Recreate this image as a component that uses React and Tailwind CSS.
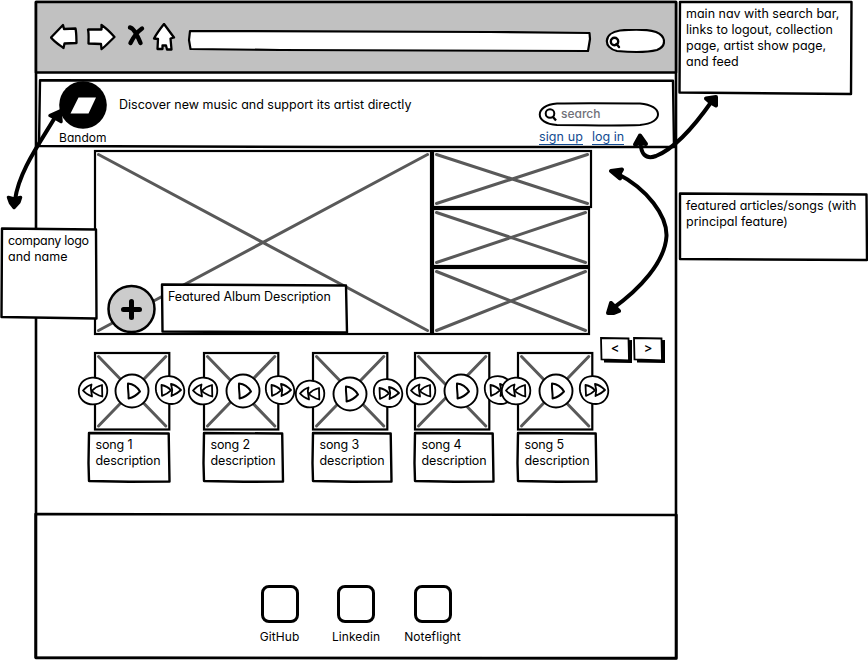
import React from "react";

// Hand-drawn rectangle outline. `pts` holds the corners: tl, tr, br, bl.
function Outline({ w, h, pts, fill = "none", sw = 2.4 }) {
  const p = pts || [[0, 0], [w, 0], [w, h], [0, h]];
  return (
    <svg className="pointer-events-none absolute left-0 top-0 overflow-visible" width={w} height={h}>
      <path
        d={"M" + p.map((c) => c.join(" ")).join("L") + "Z"}
        fill={fill}
        stroke="#000"
        strokeWidth={sw}
        strokeLinejoin="round"
      />
    </svg>
  );
}

function Crossed({ w, h, className = "", sw = 3, children }) {
  return (
    <div className={"relative shrink-0 " + className}>
      <svg className="absolute left-0 top-0 overflow-visible" width={w} height={h}>
        <rect x="0" y="0" width={w} height={h} fill="#fff" stroke="#000" strokeWidth="2.2" />
        <path
          d={`M3.5 3.5L${w - 3.5} ${h - 3.5}M${w - 3.5} 3.5L3.5 ${h - 3.5}`}
          stroke="#595959"
          strokeWidth={sw}
          strokeLinecap="round"
        />
      </svg>
      {children}
    </div>
  );
}

function Rewind({ className }) {
  return (
    <svg className={"absolute overflow-visible " + className} width="30" height="28" viewBox="0 0 30 28" stroke="#000" strokeLinejoin="round" fill="#fff">
      <path strokeWidth="1.8" d="M14 .6C22 0 29 5 29.3 13C29.6 22 23 27.4 15 27.4C7 27.4 .9 22 .8 14.5C.7 7 6 1.2 14 .6Z" />
      <path strokeWidth="1.8" d="M13.500 7.500L12.800 11L14 19.500C10 18 7 16 5 13.500C7.500 10.500 10 8.500 13.500 7.500Z" />
      <path strokeWidth="1.8" d="M24 8L24.300 19.500C20 18.200 16.500 16.500 13.800 13.800C16.500 11 20 9 24 8Z" />
    </svg>
  );
}

function Forward({ className }) {
  return (
    <svg className={"absolute overflow-visible " + className} width="30" height="28" viewBox="0 0 30 28" stroke="#000" strokeLinejoin="round" fill="#fff">
      <path strokeWidth="1.8" d="M11 .4C20 -1 28.500 5 29.300 14C29.600 22 24 28 17 28C9 28 3 23.500 1.200 16C-.5 8 3 1.500 11 .4Z" />
      <path strokeWidth="1.8" d="M6.500 9L7 19.800C10.500 18.500 13.500 16.800 16 14.300C13.500 11.500 10.500 9.800 6.500 9Z" />
      <path strokeWidth="1.8" d="M16 8L17.200 14L16.500 20C20 18.500 23.500 16.500 26 14C23 11 20 8.800 16 8Z" />
    </svg>
  );
}

function Play({ className }) {
  return (
    <svg className={"absolute overflow-visible " + className} width="34" height="34" viewBox="0 0 34 34" stroke="#000" strokeLinejoin="round" fill="#fff">
      <circle cx="17" cy="17" r="16.500" strokeWidth="1.900" />
      <path strokeWidth="2" d="M13 9.500C18 10 22 12.500 25 17.500C21.500 21.500 18 23.500 13.600 24.500C13.900 19 12.500 15 13 9.500Z" />
    </svg>
  );
}

const songs = [
  { n: 1, gap: "", desc: "-ml-[6px]", w: 80.5, rew: "-left-[17px] top-[24px]", play: "left-[20.500px] top-[20.500px]", fwd: "left-[60.500px] top-[23px]" },
  { n: 2, gap: "ml-[34px]", desc: "", w: 79, rew: "-left-[16px] top-[24px]", play: "left-[22px] top-[20.500px]", fwd: "left-[61.500px] top-[23px]" },
  { n: 3, gap: "ml-[34px]", desc: "", w: 78.5, rew: "-left-[18px] top-[26.500px]", play: "left-[20px] top-[23.500px]", fwd: "left-[60px] top-[26px]" },
  { n: 4, gap: "ml-[27px]", desc: "", w: 78.5, rew: "-left-[9px] top-[24px]", play: "left-[29px] top-[20.500px]", fwd: "left-[69px] top-[23px]" },
  { n: 5, gap: "ml-[28px]", desc: "", w: 78.5, rew: "-left-[17px] top-[24px]", play: "left-[21px] top-[20.500px]", fwd: "left-[61px] top-[23px]" },
];

function Chrome() {
  return (
    <header className="relative flex h-[71px] shrink-0 items-start bg-[#c1c1c1]">
      <Outline w={640} h={71} sw={2.6} pts={[[0, 0], [640, 0], [640, 70.5], [0, 70.5]]} />
      <svg className="relative ml-[14px] mt-[21px] shrink-0" width="128" height="29" viewBox="50 23 128 29" fill="#fff" stroke="#000" strokeWidth="2.3" strokeLinejoin="round">
        <path d="M51 37.500L63 25L64 29L75.500 28.500C76.500 33 76.300 38 76.500 43L64.500 43.500L63.500 48C58 44 54 41.500 51 37.500Z" />
        <path d="M88 29.500L101.500 29.500L101.500 25C106 28 111 33 114.500 37C110 41 106 46 101.500 49L101 44L88.500 43.500C88.500 39 89 34 88 29.500Z" />
        <path d="M130 27.500C134 28 138 37 140.500 43M142 28.500C137 32 133 38 130.500 43" strokeWidth="4.400" strokeLinecap="round" fill="none" />
        <path d="M164 24L174 37.500L170.500 38.500L171.500 49.500L167 49.500L166 45.500L162.500 45.500L162.500 49L157.500 49L158 39L154 38.500C157 33 160 29 164 24Z" />
      </svg>
      <div className="relative ml-[12px] mt-[29px] h-[19px] w-[399px] shrink-0">
        <Outline w={399} h={19} fill="#fff" sw={2.2} pts={[[0, 0], [300, 1], [399.500, 2], [400, 8], [398, 20], [90, 19], [0.500, 18], [-1, 9]]} />
      </div>
      <svg className="relative ml-[16px] mt-[27px] shrink-0" width="60" height="26" viewBox="605 29 60 26">
        <path d="M620 30.500C634 29 648 29.500 656 32C666 36 667 46 657 50C645 53 628 52 617 51C603 48 603 33 620 30.500Z" fill="#fff" stroke="#000" strokeWidth="2.200" />
        <circle cx="614.500" cy="41.500" r="3.700" fill="none" stroke="#000" strokeWidth="2.400" />
        <path d="M616.500 44L619 47" stroke="#000" strokeWidth="2.400" strokeLinecap="round" />
      </svg>
    </header>
  );
}

function Nav() {
  return (
    <nav className="relative ml-[3px] mt-[7px] flex h-[67px] w-[635px] shrink-0">
      <Outline w={635} h={67} sw={2.400} pts={[[1, 0.300], [634, 0.800], [635, 67], [300, 67], [0, 66]]} />
      <div className="ml-[20px] flex w-[60px] flex-col items-start">
        <svg className="mt-[1px]" width="48" height="48" viewBox="0 0 48 48">
          <circle cx="24" cy="24" r="23.800" />
          <path d="M19.500 16.500L37 16.500L29.500 32.500L11.500 32.500Z" fill="#fff" />
        </svg>
        <span className="mt-px text-[12px] leading-4 tracking-[0.05px]">Bandom</span>
      </div>
      <p className="mt-[17px] w-[420px] whitespace-nowrap leading-4">Discover new music and support its artist directly</p>
      <div className="mt-[23px] flex flex-col">
        <div className="relative flex h-[22px] w-[119px] items-center">
          <svg className="absolute left-0 top-0 overflow-visible" width="119" height="22">
            <path d="M18 .5C45 0 75 .3 101 .5C124 2 126 20 101 22C75 23 45 22 18 22C-5 21 -5 2 18 .5Z" fill="#fff" stroke="#000" strokeWidth="2" />
            <circle cx="11" cy="10.500" r="4.300" fill="none" stroke="#000" strokeWidth="2" />
            <path d="M14 14L17 17.500" stroke="#000" strokeWidth="2.300" />
          </svg>
          <span className="relative ml-[22px] text-[12px] font-medium text-[#707078]">search</span>
        </div>
        <div className="mt-[4px] flex gap-[9px] text-[#134b91]">
          <a className="h-[16px] whitespace-nowrap border-b border-[#134b91] leading-4 tracking-[0.1px]">sign up</a>
          <a className="h-[16px] whitespace-nowrap border-b border-[#134b91] leading-4">log in</a>
        </div>
      </div>
    </nav>
  );
}

function Featured() {
  return (
    <section className="ml-[58.500px] mt-[4px] flex shrink-0">
      <Crossed w={336} h={183} className="flex h-[183px] w-[337px] items-end">
        <svg className="relative mb-px ml-[12px]" width="50" height="50" viewBox="0 0 50 50">
          <circle cx="24.500" cy="26" r="23" fill="#ccc" stroke="#000" strokeWidth="2.500" />
          <path d="M16.500 26.500H32.500M24.500 18.500V34.500" stroke="#000" strokeWidth="5" strokeLinecap="round" />
        </svg>
        <div className="relative mb-[2px] ml-[5px] h-[47px] w-[184px]">
          <Outline w={184} h={47} fill="#fff" pts={[[0, -0.500], [184, 0.500], [185, 47.500], [0.500, 46.500]]} />
          <p className="relative ml-[6.500px] mt-[4px] whitespace-nowrap leading-4 tracking-[-0.09px]">Featured Album Description</p>
        </div>
      </Crossed>
      <div className="flex flex-col gap-[2px]">
        <Crossed w={158} h={56} className="ml-[1px] h-[56px] w-[158px]" />
        <Crossed w={156} h={57} className="ml-[1.500px] h-[57px] w-[156px]" />
        <Crossed w={156} h={66} className="ml-[1.500px] h-[66px] w-[156px]" />
      </div>
    </section>
  );
}

function Songs() {
  return (
    <section className="ml-[58.500px] mt-[19px] flex shrink-0">
      {songs.map((s) => (
        <article key={s.n} className={"w-[75px] shrink-0 " + s.gap}>
          <Crossed w={74.300} h={76.500} className="h-[79.500px] w-[75px]">
            <Rewind className={s.rew} />
            <Play className={s.play} />
            <Forward className={s.fwd} />
          </Crossed>
          <div className={"relative h-[48px] w-[84px] " + s.desc}>
            <Outline w={s.w} h={48} pts={[[0, 0], [s.w - 0.800, 0.500], [s.w, 48.500], [s.w / 2, 48.800], [0, 48], [-0.500, 30]]} />
            <p className="relative whitespace-nowrap pl-[7px] pt-[4px] leading-4 tracking-[-0.12px]">
              song {s.n}
              <br />
              description
            </p>
          </div>
        </article>
      ))}
    </section>
  );
}

function Pager() {
  return (
    <div className="absolute left-[565px] top-[338px] flex gap-[5px]">
      {["<", ">"].map((c) => (
        <button key={c} className="relative flex h-[22px] w-[28px] items-center justify-center">
          <svg className="absolute left-0 top-0 overflow-visible" width="28" height="22">
            <path d="M3 3L31 2L31 25L3 24.500Z" />
            <path d="M0 0L27.500 .5L28 22.500L.5 21.500Z" fill="#fff" stroke="#000" strokeWidth="1.800" />
          </svg>
          <span className="relative text-[13px] font-medium">{c}</span>
        </button>
      ))}
    </div>
  );
}

function Footer() {
  return (
    <footer className="relative mb-[2px] mt-auto flex h-[144px] w-[640px] shrink-0 justify-center">
      <Outline w={640} h={144} pts={[[-0.500, 0], [640.500, 1], [640.500, 144.500], [-0.500, 143.500]]} />
      <div className="flex pt-[71px]">
        {["GitHub", "Linkedin", "Noteflight"].map((t) => (
          <div key={t} className="flex w-[76.500px] flex-col items-center">
            <div className="h-[38px] w-[38px] rounded-[8px] border-[3px] border-black" />
            <span className="mt-[6px] text-[12px] leading-4 tracking-[0.1px]">{t}</span>
          </div>
        ))}
      </div>
    </footer>
  );
}

function Note({ className, w, h, pts, children }) {
  return (
    <aside className={"absolute " + className}>
      <Outline w={w} h={h} pts={pts} fill="#fff" />
      <p className="relative whitespace-nowrap pl-[6px] pt-[4px] leading-4">{children}</p>
    </aside>
  );
}

function Arrows() {
  return (
    <svg className="pointer-events-none absolute left-0 top-0" width="868" height="660" fill="none" stroke="#000" strokeWidth="4" strokeLinejoin="round">
      <path d="M15 200C19 170 42 140 57 114" />
      <path d="M8.500 197.500L14 199L20.500 197.500L19 202L14 207.500L10.500 203ZM60 111L50 115.500L55 118L61 121.500Z" fill="#000" strokeWidth="3.500" />
      <path d="M712 101C698 121 676 148 656 156C645 160 641 153 640.500 143" />
      <path d="M716 97L706 98.500L710 102L716 105.500ZM640 135.500L635 144.500L640 143L646 144Z" fill="#000" strokeWidth="4" />
      <path d="M616 173C648 189 667 216 666.500 236C665 262 640 289 612 309" />
      <path d="M611 171L622 169.500L620 173L620 178.500ZM608 313L611 303L615 307L619 311L614 313Z" fill="#000" strokeWidth="4" />
    </svg>
  );
}

export default function App() {
  return (
    <div className="relative h-[660px] w-[868px] overflow-hidden bg-white font-['Inter',sans-serif] text-[12.500px] text-black [font-feature-settings:'cv11']">
      <main className="relative ml-[36px] flex h-[660px] w-[640px] flex-col pt-[2px]">
        <Outline w={640} h={658} pts={[[0, 2], [640, 2], [640, 658], [0, 658]]} sw={2.600} />
        <Chrome />
        <Nav />
        <Featured />
        <Songs />
        <Pager />
        <Footer />
      </main>
      <Note className="left-[680px] top-[2px]" w={171} h={92} pts={[[0, 0], [171.500, 0], [171, 92], [-0.500, 90.500]]}>
        main nav with search bar,<br />links to logout, collection<br />page, artist show page,<br />and feed
      </Note>
      <Note className="left-[680px] top-[194px]" w={187} h={65} pts={[[0, -0.500], [186.500, 0.500], [187, 66], [0, 65]]}>
        featured articles/songs (with<br />principal feature)
      </Note>
      <Note className="left-[2px] top-[229px]" w={95} h={89} pts={[[0, -0.500], [94, 0.500], [94.500, 89.500], [-0.500, 88]]}>
        <span className="tracking-[-0.3px]">company logo</span><br />and name
      </Note>
      <Arrows />
    </div>
  );
}
